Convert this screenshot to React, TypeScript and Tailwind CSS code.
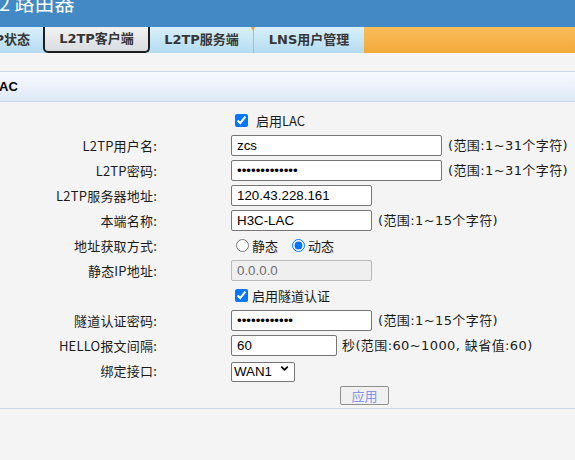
import { ChevronDown } from 'lucide-react'

const Row = ({ label, children }: { label?: string; children?: React.ReactNode }) => (
  <div className="flex items-center h-[25px]">
    <div className="w-[157px] text-right whitespace-nowrap tracking-[0.2px]">{label}</div>
    <div className="ml-[74px] flex items-center whitespace-nowrap">{children}</div>
  </div>
)

const inputCls =
  "h-[21px] border border-[#767676] rounded-[2px] bg-white px-[5px] text-[13.33px] text-black font-['Liberation_Sans',sans-serif] outline-none"

const Hint = ({ children, gap = 'ml-[6px]' }: { children: React.ReactNode; gap?: string }) => (
  <span className={`${gap} text-[#1a1a1a] tracking-[0.4px] font-['DejaVu_Sans','Noto_Sans_CJK_SC',sans-serif]`}>{children}</span>
)

const App = () => {
  return (
    <div className="w-[575px] h-[460px] overflow-hidden bg-[#f4f4f4] text-[13px] text-[#1a1a1a] font-['Noto_Sans_CJK_SC',sans-serif]">
      {/* Title */}
      <div className="h-[27px] overflow-hidden bg-[#4289c6] text-white text-[20px] leading-[6px] -ml-[1px] whitespace-nowrap">
        2 路由器
      </div>

      {/* Tabs */}
      <div className="h-[26px] flex bg-gradient-to-b from-[#d9f0fa] to-[#b4dcf0] text-[#363636] font-bold text-[13px] font-['DejaVu_Sans','Noto_Sans_CJK_SC',sans-serif]">
        <div className="w-[43px] flex items-center justify-end pr-[13px] overflow-hidden whitespace-nowrap">P状态</div>
        <div className="w-[107px] h-[26px] flex items-center justify-center border-2 border-t-0 border-[#1e1e1e] rounded-b-[5px] bg-gradient-to-b from-[#f2f2f2] to-[#d9dde1]">
          L2TP客户端
        </div>
        <div className="w-[103px] flex items-center justify-center">L2TP服务端</div>
        <div className="w-px bg-[#f0b04a] relative">
          <div className="absolute -left-[2px] top-0 w-0 h-0 border-l-[2.5px] border-r-[2.5px] border-t-[4px] border-l-transparent border-r-transparent border-t-[#f0a030]" />
        </div>
        <div className="w-[110px] flex items-center justify-center">LNS用户管理</div>
        <div className="flex-1 bg-gradient-to-b from-[#f8bd58] to-[#f4a93b]" />
      </div>

      <div className="h-[18px]" />

      {/* Section header */}
      <div className="h-[31px] border-y border-[#c8d7ea] bg-gradient-to-b from-[#f8fafe] to-[#dfe8f7] flex items-center font-bold text-black font-['Liberation_Sans',sans-serif] text-[13px] -ml-[1px]">
        AC
      </div>

      {/* Form */}
      <div className="pt-[6px] leading-[25px]">
        <Row>
          <input type="checkbox" defaultChecked className="ml-[4px] w-[13px] h-[13px] accent-[#0075ff]" />
          <span className="ml-[8px]">启用LAC</span>
        </Row>
        <Row label="L2TP用户名:">
          <input className={`${inputCls} w-[211px]`} defaultValue="zcs" />
          <Hint>(范围:1~31个字符)</Hint>
        </Row>
        <Row label="L2TP密码:">
          <input type="password" className={`${inputCls} w-[211px]`} defaultValue="1234567890123" />
          <Hint>(范围:1~31个字符)</Hint>
        </Row>
        <Row label="L2TP服务器地址:">
          <input className={`${inputCls} w-[141px]`} defaultValue="120.43.228.161" />
        </Row>
        <Row label="本端名称:">
          <input className={`${inputCls} w-[141px]`} defaultValue="H3C-LAC" />
          <Hint>(范围:1~15个字符)</Hint>
        </Row>
        <Row label="地址获取方式:">
          <label className="flex items-center">
            <input type="radio" name="mode" className="ml-[5px] w-[13px] h-[13px] accent-[#0075ff]" />
            <span className="ml-[3px]">静态</span>
          </label>
          <label className="flex items-center ml-[14px]">
            <input type="radio" name="mode" defaultChecked className="w-[13px] h-[13px] accent-[#0075ff]" />
            <span className="ml-[3px]">动态</span>
          </label>
        </Row>
        <Row label="静态IP地址:">
          <input
            disabled
            className={`${inputCls} w-[141px] !bg-[#efefef] !border-[#b9b9b9] !text-[#6d6d6d]`}
            defaultValue="0.0.0.0"
          />
        </Row>
        <Row>
          <input type="checkbox" defaultChecked className="ml-[4px] w-[13px] h-[13px] accent-[#0075ff]" />
          <span className="ml-[4px]">启用隧道认证</span>
        </Row>
        <Row label="隧道认证密码:">
          <input type="password" className={`${inputCls} w-[141px]`} defaultValue="123456789012" />
          <Hint>(范围:1~15个字符)</Hint>
        </Row>
        <Row label="HELLO报文间隔:">
          <input className={`${inputCls} w-[106px]`} defaultValue="60" />
          <Hint gap="ml-[5px]">秒(范围:60~1000, 缺省值:60)</Hint>
        </Row>
        <Row label="绑定接口:">
          <div className="relative">
            <select className="appearance-none h-[20px] w-[64px] border border-[#767676] rounded-[2px] bg-white pl-[2px] text-[13.33px] leading-[18px] text-black font-['Liberation_Sans',sans-serif] outline-none">
              <option>WAN1</option>
            </select>
            <ChevronDown size={11} strokeWidth={4} className="absolute right-[5px] top-[5px] text-black pointer-events-none" />
          </div>
        </Row>
        <div className="h-[25px] flex items-center">
          <button className="ml-[340px] w-[49px] h-[19px] border border-[#8f8f8f] rounded-[2px] bg-[#f0f0f0] text-[#8197e6] text-[13px] leading-[17px]">
            应用
          </button>
        </div>
      </div>
      <div className="border-t border-[#c8d7ea]" />
    </div>
  )
}

export default App
